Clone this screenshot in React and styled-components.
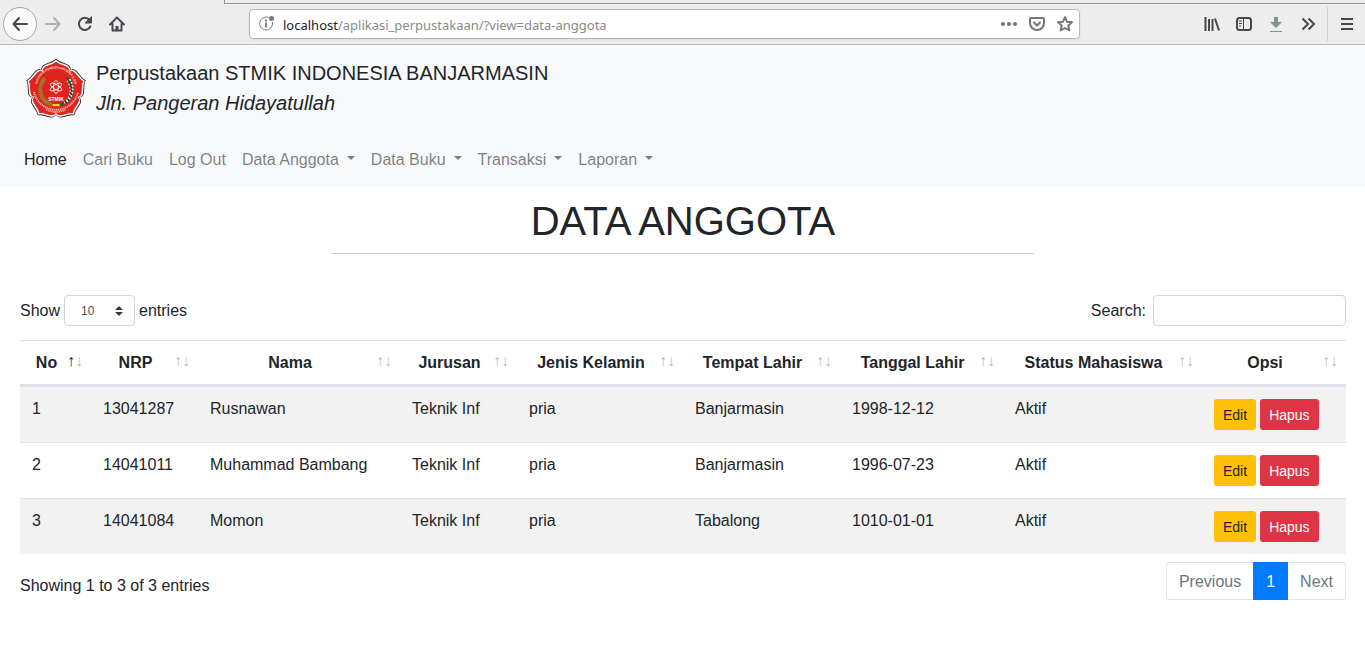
import React from "react";
import styled, { createGlobalStyle, css } from "styled-components";

const GlobalStyle = createGlobalStyle`
  *, *::before, *::after { box-sizing: border-box; }
  body {
    margin: 0;
    background: #fff;
    color: #212529;
    font: 16px/24px "Liberation Sans", Arial, sans-serif;
  }
  button, input, select { font-family: inherit; margin: 0; }
`;

/* ---------- Browser toolbar ---------- */

const Toolbar = styled.div`
  display: flex;
  align-items: center;
  height: 45px;
  padding: 3px 0 0 3px;
  background: #ededed;
  border-bottom: 1px solid #b6babc;
`;

const TabEdge = styled.div`
  position: absolute;
  top: 0;
  left: 224px;
  right: 0;
  height: 4px;
  border: solid #989898;
  border-width: 0 0 1px 1px;
`;

const ToolGroup = styled.div`
  display: flex;
  align-items: center;
`;

const ToolButton = styled.button`
  display: grid;
  place-items: center;
  width: ${(p) => p.$width || 32}px;
  height: 34px;
  padding: 0;
  border: 0;
  background: none;
  color: ${(p) => p.$color || "#45494d"};
`;

const BackButton = styled(ToolButton)`
  border: 1px solid #a6a6a6;
  border-radius: 50%;
  background: #fbfbfb;
`;

const MenuButton = styled(ToolButton)`
  margin-left: 3px;
  border-left: 1px solid #cfcfcf;
`;

const AddressBar = styled.form`
  display: flex;
  align-items: center;
  flex: 0 1 831px;
  min-width: 0;
  height: 30px;
  margin: 0 auto 0 116px;
  padding: 0 0 0 8px;
  background: #fff;
  border: 1px solid #b8b8b8;
  border-radius: 4px;
  box-shadow: 0 1px 3px rgba(0, 0, 0, 0.08);
`;

const Address = styled.a`
  flex: 1;
  padding: 2px 0 0 8px;
  overflow: hidden;
  white-space: nowrap;
  color: #8a8a8a;
  font: 13px/20px "Noto Sans", "Open Sans", sans-serif;
  text-decoration: none;
  b { font-weight: 400; color: #222; }
`;

/* ---------- Page header ---------- */

const Header = styled.header`
  padding: 13px 16px 7px;
  background: #f8f9fb;
`;

const Brand = styled.a`
  display: flex;
  gap: 10px;
  padding-left: 10px;
  color: #212529;
  font-size: 20px;
  line-height: 30px;
  text-decoration: none;
`;

const BrandText = styled.span`
  display: flex;
  flex-direction: column;
`;

const Nav = styled.nav`
  display: flex;
  flex-wrap: wrap;
  margin-top: 22px;
`;

const NavLink = styled.a`
  display: flex;
  align-items: center;
  padding: 8px;
  color: ${(p) => (p.$active ? "rgba(0,0,0,.9)" : "rgba(0,0,0,.5)")};
  text-decoration: none;
  ${(p) =>
    p.$menu &&
    css`
      &::after {
        content: "";
        margin: 0 0 4px 8px;
        border: 4px solid transparent;
        border-top-color: currentColor;
        border-bottom: 0;
      }
    `}
`;

/* ---------- Content ---------- */

const Main = styled.main`
  padding: 10px 19px 24px 20px;
`;

const Title = styled.h1`
  width: 53%;
  margin: 0 auto 41px;
  padding-bottom: 8px;
  border-bottom: 1px solid #c8c8c8;
  font-size: 40px;
  font-weight: 400;
  line-height: 48px;
  text-align: center;
`;

const Bar = styled.div`
  display: flex;
  justify-content: space-between;
`;

const Label = styled.label`
  display: flex;
  align-items: center;
  gap: ${(p) => p.$gap}px;
  height: 31px;
`;

const SelectBox = styled.span`
  display: grid;
  align-items: center;
  justify-items: end;
  > * { grid-area: 1 / 1; }
  svg { margin-right: 12px; pointer-events: none; }
`;

const Select = styled.select`
  appearance: none;
  width: 71px;
  height: 31px;
  padding: 0 16px;
  border: 1px solid #ced4da;
  border-radius: 4px;
  background: #fff;
  color: #495057;
  font-size: 12px;
`;

const SearchInput = styled.input`
  width: 193px;
  height: 31px;
  padding: 4px 8px;
  border: 1px solid #ced4da;
  border-radius: 4px;
  font-size: 14px;
`;

const Table = styled.table`
  width: 100%;
  margin: 14px 0 8px;
  table-layout: fixed;
  border-collapse: separate;
  border-spacing: 0;
`;

const Th = styled.th`
  position: relative;
  padding: 10px 30px 9px 12px;
  border-top: 1px solid #dee2e6;
  border-bottom: 2px solid #dee2e6;
  white-space: nowrap;
`;

const Sort = styled.span`
  position: absolute;
  right: 8px;
  top: 8px;
  display: flex;
  color: #212529;
  font-weight: 400;
  i { font-style: normal; opacity: 0.3; }
  i:first-child { opacity: ${(p) => (p.$asc ? 1 : 0.3)}; }
`;

const Row = styled.tr`
  &:nth-child(odd) { background: #f2f2f2; }
`;

const Td = styled.td`
  height: 56px;
  padding: 10px 12px;
  border-top: 1px solid #dee2e6;
  vertical-align: top;
  white-space: nowrap;
`;

const Actions = styled.div`
  display: flex;
  gap: 4px;
  padding-top: 2px;
`;

const ActionButton = styled.button`
  height: 31px;
  padding: 2px 9px 0;
  border: 0;
  border-radius: 3px;
  background: ${(p) => (p.$danger ? "#dc3545" : "#ffc107")};
  color: ${(p) => (p.$danger ? "#fff" : "#212529")};
  font-size: 14px;
  line-height: 21px;
`;

const Info = styled.div`
  padding-top: 12px;
`;

const Pagination = styled.nav`
  display: flex;
`;

const PageButton = styled.button`
  height: 38px;
  padding: 2px 12px 0;
  border: 1px solid ${(p) => (p.$active ? "#007bff" : "#dee2e6")};
  background: ${(p) => (p.$active ? "#007bff" : "#fff")};
  color: ${(p) => (p.$active ? "#fff" : "#6c757d")};
  font-size: 16px;
  line-height: 24px;
  &:first-child { border-right: 0; border-radius: 4px 0 0 4px; }
  &:last-child { border-left: 0; border-radius: 0 4px 4px 0; }
`;

/* ---------- Drawings ---------- */

const Icon = ({ children, size = 16, w = 2 }) => (
  <svg width={size} height={size} viewBox="0 0 16 16" fill="none" stroke="currentColor"
    strokeWidth={w} strokeLinecap="round" strokeLinejoin="round" aria-hidden="true">
    {children}
  </svg>
);

const PETAL = "M30 30 L16.5 11.4 C14 3.5 25 5 30 0 C35 5 46 3.5 43.5 11.4 Z";
const petals = [0, 72, 144, 216, 288];
const leaves = [0, 1, 2, 3, 4, 5, 6, 7];

const Flower = ({ scale, fill }) => (
  <g transform={`translate(30 30) scale(${scale}) translate(-30 -30)`} fill={fill} stroke={fill} strokeWidth="1">
    {petals.map((a) => (
      <path key={a} d={PETAL} transform={`rotate(${a} 30 30)`} />
    ))}
  </g>
);

const Logo = () => (
  <svg width="60" height="60" viewBox="0 -2 60 60" role="img" aria-label="STMIK">
    <Flower scale={1.02} fill="#3b3030" />
    <Flower scale={0.985} fill="#fff" />
    <Flower scale={0.93} fill="#de241c" />
    <defs>
      <path id="ring-top" d="M13.500 37 A19 19 0 1 1 46.500 37" />
    </defs>
    <g fill="#ffe3df" fontFamily="Liberation Sans, sans-serif" fontWeight="700">
      <text fontSize="3.200"><textPath href="#ring-top" startOffset="50%" textAnchor="middle">YAYASAN PENDIDIKAN BINA ILMU</textPath></text>
      <text x="30" y="41" fontSize="5" textAnchor="middle" fill="#fff">STMIK</text>
    </g>
    <g fill="none" stroke="#f7b9b4">
      <path d="M8 32 A22.500 22.500 0 0 0 52 32" strokeWidth="2" strokeDasharray="1.200 .7" />
      <path d="M20 49.500 A22 22 0 0 0 40 49.500" strokeWidth="1.600" strokeDasharray="1.200 .7" />
    </g>
    <path d="M19 18 C11 27 13 41 26 45" fill="none" stroke="#a8842c" strokeWidth="3.600" />
    <path d="M19 18 C11 27 13 41 26 45" fill="none" stroke="#6d6124" strokeWidth="3" strokeDasharray=".6 1.200" />
    <path d="M41 18 C49 27 47 41 34 45" fill="none" stroke="#1d6546" strokeWidth="2.600" />
    {leaves.map((n) => {
      const t = (n * 12 - 34) * (Math.PI / 180);
      const x = 30 + 15.5 * Math.cos(t);
      const y = 29 + 16 * Math.sin(t);
      return (
        <g key={n}>
          <circle cx={x + 1.2} cy={y} r="1" fill="#e9f3ee" />
          <circle cx={x - 1.2} cy={y + 1.4} r=".9" fill="#d5e8de" />
          <circle cx={x} cy={y + 1} r=".9" fill="#123f2c" />
        </g>
      );
    })}
    <path d="M26.500 44 h7 v2.200 h-7z" fill="#f5d21c" />
    <g fill="none" stroke="#fff" strokeWidth=".8">
      {[0, 60, 120].map((a) => (
        <ellipse key={a} cx="30" cy="27" rx="2.400" ry="6.600" transform={`rotate(${a} 30 27)`} />
      ))}
    </g>
  </svg>
);

/* ---------- Data ---------- */

const toolbarRight = [
  ["Library", <Icon><path d="M1.500 1v14M5 3v12M8.500 3v12M11 2.500l4 12" strokeLinecap="butt" /></Icon>],
  ["Sidebars", <Icon><rect x="1" y="2" width="14" height="12" rx="2.500" /><path d="M7.500 2v12" strokeWidth="1" /><path d="M3 5h3M3 7.500h3M3 10h2" strokeWidth="1" strokeLinecap="butt" /></Icon>],
  ["Downloads", <Icon><path d="M8 1v5" strokeWidth="4" strokeLinecap="butt" /><path d="M2 6h12l-6 6z" fill="currentColor" stroke="none" /><path d="M2 15.500h12" strokeWidth="1" strokeLinecap="butt" /></Icon>, "#7f9292"],
  ["More tools", <Icon><path d="M2.500 2.500L8 8l-5.500 5.500M8.500 2.500L14 8l-5.500 5.500" strokeLinecap="butt" strokeLinejoin="miter" /></Icon>],
];

const navItems = [
  ["Home"], ["Cari Buku"], ["Log Out"],
  ["Data Anggota", true], ["Data Buku", true], ["Transaksi", true], ["Laporan", true],
];

const columns = [
  ["No", 71], ["NRP", 107], ["Nama", 202], ["Jurusan", 117], ["Jenis Kelamin", 166],
  ["Tempat Lahir", 157], ["Tanggal Lahir", 163], ["Status Mahasiswa", 199], ["Opsi", 144],
];

const members = [
  ["1", "13041287", "Rusnawan", "Teknik Inf", "pria", "Banjarmasin", "1998-12-12", "Aktif"],
  ["2", "14041011", "Muhammad Bambang", "Teknik Inf", "pria", "Banjarmasin", "1996-07-23", "Aktif"],
  ["3", "14041084", "Momon", "Teknik Inf", "pria", "Tabalong", "1010-01-01", "Aktif"],
];

const BrowserBar = () => (
  <Toolbar>
    <TabEdge />
    <ToolGroup>
      <BackButton $width={34} aria-label="Back">
        <Icon><path d="M15 8H1.500M7 2L1.500 8L7 14" /></Icon>
      </BackButton>
      <ToolButton aria-label="Forward" $color="#b0b0b0">
        <Icon><path d="M1 8h13.500M9 2l5.500 6L9 14" /></Icon>
      </ToolButton>
      <ToolButton aria-label="Reload">
        <Icon><path d="M13.300 10.500A6 6 0 1 1 12.500 4" /><path d="M14.500 1v6h-6z" fill="currentColor" strokeWidth="1" /></Icon>
      </ToolButton>
      <ToolButton aria-label="Home page">
        <Icon><path d="M1 8.500L8 1.500l7 7M3.500 8v6.500h9V8" /><path d="M8 14v-4" strokeWidth="3" strokeLinecap="butt" /></Icon>
      </ToolButton>
    </ToolGroup>
    <AddressBar>
      <svg width="17" height="17" viewBox="0 0 17 17" fill="none" stroke="#7b7e80" aria-hidden="true">
        <path d="M10.500 2.500A6.500 6.500 0 1 0 14.400 7" />
        <path d="M8 7.500v5M8 4.500v2" strokeWidth="2" />
        <circle cx="13.500" cy="3.500" r="2.500" fill="#74797d" stroke="none" />
      </svg>
      <Address href="#"><b>localhost</b>/aplikasi_perpustakaan/?view=data-anggota</Address>
      <ToolButton type="button" $width={28} $color="#737779" aria-label="Page actions">
        <Icon><g fill="currentColor" stroke="none"><circle cx="2" cy="8" r="2" /><circle cx="8" cy="8" r="2" /><circle cx="14" cy="8" r="2" /></g></Icon>
      </ToolButton>
      <ToolButton type="button" $width={28} $color="#737779" aria-label="Save to Pocket">
        <Icon><path d="M2 2h12a1 1 0 0 1 1 1v4a7 7 0 0 1-14 0V3a1 1 0 0 1 1-1zM5 6.500l3 3 3-3" /></Icon>
      </ToolButton>
      <ToolButton type="button" $width={28} $color="#737779" aria-label="Bookmark">
        <Icon><path d="M8 1.200l2 4.500 5 .5-3.700 3.300 1.100 5L8 12l-4.400 2.500 1.100-5L1 6.200l5-.5z" /></Icon>
      </ToolButton>
    </AddressBar>
    <ToolGroup>
      {toolbarRight.map(([name, icon, color]) => (
        <ToolButton key={name} aria-label={name} $color={color}>{icon}</ToolButton>
      ))}
      <MenuButton aria-label="Menu" $width={38}>
        <Icon><path d="M2 3h12M2 8h12M2 13h12" strokeLinecap="butt" /></Icon>
      </MenuButton>
    </ToolGroup>
  </Toolbar>
);

export default function App() {
  return (
    <>
      <GlobalStyle />
      <BrowserBar />
      <Header>
        <Brand href="#">
          <Logo />
          <BrandText>
            <span>Perpustakaan STMIK INDONESIA BANJARMASIN</span>
            <em>Jln. Pangeran Hidayatullah</em>
          </BrandText>
        </Brand>
        <Nav>
          {navItems.map(([name, menu], i) => (
            <NavLink key={name} href="#" $active={i === 0} $menu={menu}>{name}</NavLink>
          ))}
        </Nav>
      </Header>
      <Main>
        <Title>DATA ANGGOTA</Title>
        <Bar>
          <Label $gap={4} htmlFor="length">
            Show
            <SelectBox>
              <Select id="length" defaultValue="10">
                <option>10</option><option>25</option><option>50</option><option>100</option>
              </Select>
              <svg width="8" height="10" viewBox="0 0 8 10" fill="#343a40" aria-hidden="true">
                <path d="M0 4l4-4 4 4zM0 6h8l-4 4z" />
              </svg>
            </SelectBox>
            entries
          </Label>
          <Label $gap={7} htmlFor="search">
            Search:
            <SearchInput id="search" type="search" />
          </Label>
        </Bar>
        <Table>
          <colgroup>
            {columns.map(([name, width]) => <col key={name} style={{ width }} />)}
          </colgroup>
          <thead>
            <tr>
              {columns.map(([name], i) => (
                <Th key={name}>{name}<Sort $asc={i === 0} aria-hidden="true"><i>↑</i><i>↓</i></Sort></Th>
              ))}
            </tr>
          </thead>
          <tbody>
            {members.map((member) => (
              <Row key={member[0]}>
                {member.map((value, i) => <Td key={columns[i][0]}>{value}</Td>)}
                <Td>
                  <Actions>
                    <ActionButton>Edit</ActionButton>
                    <ActionButton $danger>Hapus</ActionButton>
                  </Actions>
                </Td>
              </Row>
            ))}
          </tbody>
        </Table>
        <Bar>
          <Info>Showing 1 to 3 of 3 entries</Info>
          <Pagination aria-label="Pages">
            <PageButton disabled>Previous</PageButton>
            <PageButton $active>1</PageButton>
            <PageButton disabled>Next</PageButton>
          </Pagination>
        </Bar>
      </Main>
    </>
  );
}
